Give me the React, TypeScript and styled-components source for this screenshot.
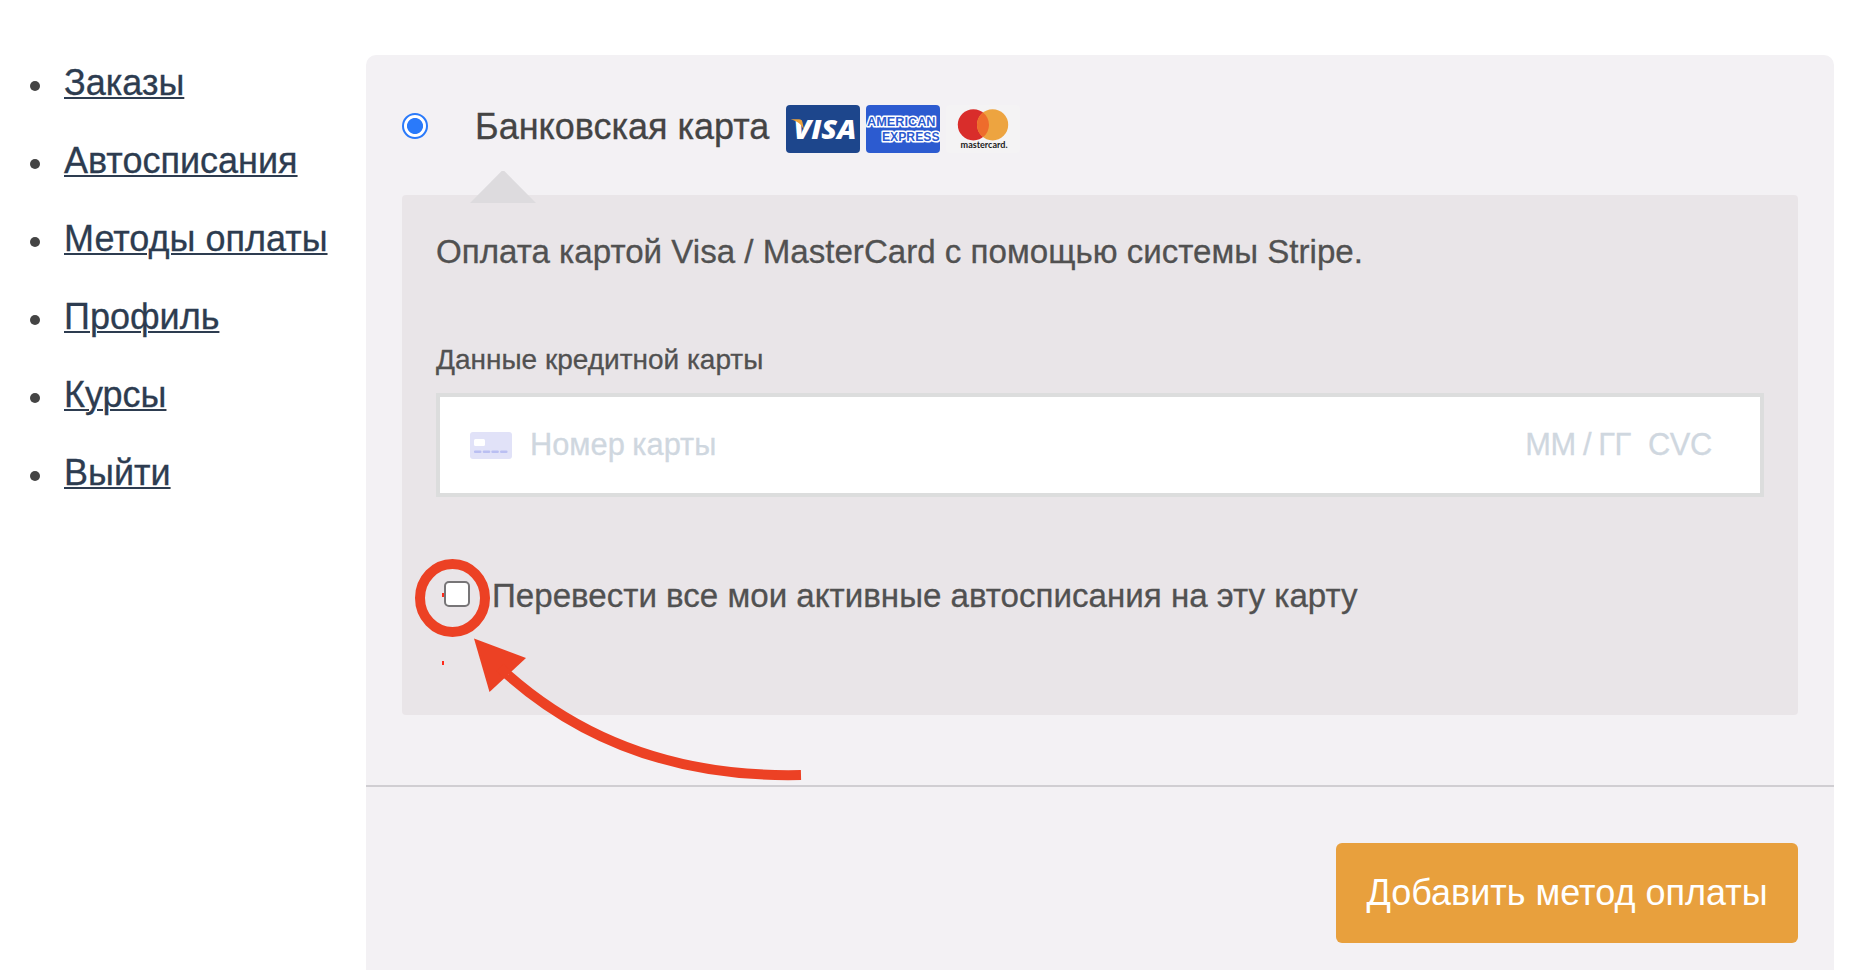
import React from 'react';
import styled, { createGlobalStyle } from 'styled-components';

const colors = {
  text: '#444444',
  boxText: '#515151',
  link: '#2d3c50',
  panel: '#f3f1f4',
  box: '#e9e5e8',
  notch: '#dddbde',
  border: '#dcdddd',
  divider: '#d0ced2',
  placeholder: '#cfd7df',
  accent: '#e8a03d',
  radio: '#2a7afa',
  mark: '#ec4124',
};

const GlobalStyle = createGlobalStyle`
  * {
    box-sizing: border-box;
  }

  body {
    margin: 0;
    background: #ffffff;
    color: ${colors.text};
    font-family: 'Liberation Sans', Arial, sans-serif;
    font-size: 36px;
    -webkit-text-stroke: 0.3px;
  }
`;

const Page = styled.div`
  display: flex;
  align-items: flex-start;
  height: 970px;
  overflow: hidden;
`;

const Nav = styled.nav`
  width: 366px;
  flex-shrink: 0;
  padding-top: 44px;
`;

const NavList = styled.ul`
  margin: 0;
  padding: 0 0 0 30px;
  list-style: none;
`;

const NavItem = styled.li`
  display: flex;
  align-items: center;
  gap: 24px;
  height: 78px;
  line-height: 78px;

  &::before {
    content: '';
    width: 10px;
    height: 10px;
    margin-top: 6px;
    border-radius: 50%;
    background: ${colors.text};
  }
`;

const NavLink = styled.a`
  color: ${colors.link};
  text-decoration: underline;
  text-decoration-thickness: 2px;
  text-underline-offset: 2px;
  white-space: nowrap;
`;

const Panel = styled.main`
  width: 1468px;
  height: 960px;
  margin-top: 55px;
  flex-shrink: 0;
  background: ${colors.panel};
  border-radius: 10px;
`;

const Methods = styled.section`
  height: 732px;
  padding: 34px 36px 0;
  border-bottom: 2px solid ${colors.divider};
`;

const MethodRow = styled.label`
  display: flex;
  align-items: center;
  height: 76px;
`;

const Radio = styled.input`
  appearance: none;
  width: 26px;
  height: 26px;
  margin: 0 47px 2px 0;
  border: 2px solid ${colors.radio};
  border-radius: 50%;
  background: radial-gradient(circle, ${colors.radio} 7.6px, #ffffff 8.4px);
`;

const MethodName = styled.span`
  width: 311px;
  line-height: 42px;
  white-space: nowrap;
`;

const Logos = styled.span`
  display: flex;
  gap: 6px;
  margin-top: 3px;
`;

const LogoSvg = styled.svg`
  display: block;
  width: 74px;
  height: 48px;
  border-radius: 4px;
  -webkit-text-stroke: 0;
`;

const PaymentBox = styled.div`
  position: relative;
  height: 520px;
  margin-top: 30px;
  padding: 34px 34px 0;
  background: ${colors.box};
  border-radius: 4px;
  color: ${colors.boxText};

  &::before {
    content: '';
    position: absolute;
    top: -24px;
    left: 68px;
    width: 66px;
    height: 32px;
    background: ${colors.notch};
    clip-path: polygon(48% 0, 52% 0, 100% 100%, 0 100%);
  }
`;

const Description = styled.p`
  margin: 0;
  font-size: 33.12px;
  line-height: 46px;
`;

const FieldLabel = styled.div`
  margin-top: 68px;
  font-size: 28px;
  line-height: 34px;
`;

const CardField = styled.div`
  display: flex;
  align-items: center;
  height: 104px;
  margin-top: 16px;
  padding: 0 48px 0 30px;
  background: #ffffff;
  border: 4px solid ${colors.border};
  color: ${colors.placeholder};
  font-size: 30.8px;
  word-spacing: -1px;
`;

const CardIcon = styled.svg`
  width: 42px;
  height: 27px;
  margin-right: 18px;
`;

const CardNumber = styled.span`
  flex: 1;
`;

const CardExpiry = styled.span`
  margin-right: 17px;
  letter-spacing: -0.4px;
`;

const CardCvc = styled.span`
  letter-spacing: -0.3px;
`;

const TransferRow = styled.label`
  display: flex;
  align-items: center;
  height: 46px;
  margin: 76px 0 0 8px;
  font-size: 33.12px;
  line-height: 46px;
`;

const Checkbox = styled.input`
  appearance: none;
  width: 26px;
  height: 26px;
  margin: 0 22px 4px 0;
  background: #ffffff;
  border: 2px solid #777577;
  border-radius: 5px;
`;

const Footer = styled.footer`
  display: flex;
  justify-content: flex-end;
  padding: 56px 36px 0;
`;

const SubmitButton = styled.button`
  width: 462px;
  height: 100px;
  padding: 0;
  border: 0;
  border-radius: 6px;
  background: ${colors.accent};
  color: #ffffff;
  font-family: inherit;
  font-size: 36px;
  line-height: 100px;
  white-space: nowrap;
  -webkit-text-stroke: 0;
`;

// Hand-drawn highlight that floats over the form
const Annotation = styled.svg`
  position: absolute;
  top: 360px;
  left: 8px;
  width: 400px;
  height: 230px;
  pointer-events: none;
`;

const links = ['Заказы', 'Автосписания', 'Методы оплаты', 'Профиль', 'Курсы', 'Выйти'];

const VisaLogo: React.FC = () => (
  <LogoSvg viewBox="0 0 74 48">
    <rect width="74" height="48" fill="#1d468c" />
    <text x="7.5" y="33.6" textLength="63" lengthAdjust="spacingAndGlyphs" fill="#ffffff" fontFamily="Open Sans" fontWeight="800" fontStyle="italic" fontSize="26.5">VISA</text>
    <path d="M4.5 14.2H13C15 14.2 16 15.2 16.4 17L18.2 25.5C15.8 19.6 11.5 16 4.5 14.2Z" fill="#eda33b" />
  </LogoSvg>
);

const AmexLogo: React.FC = () => (
  <LogoSvg viewBox="0 0 74 48">
    <rect width="74" height="48" fill="#2c5bd0" />
    <g fill="#2c5bd0" stroke="#ffffff" strokeWidth="3.2" strokeLinejoin="round" paintOrder="stroke" fontFamily="Liberation Sans" fontWeight="700" fontSize="13.4">
      <text x="1" y="21.3" textLength="68.5" lengthAdjust="spacingAndGlyphs">AMERICAN</text>
      <text x="16" y="36.3" textLength="57.5" lengthAdjust="spacingAndGlyphs">EXPRESS</text>
    </g>
  </LogoSvg>
);

const MastercardLogo: React.FC = () => (
  <LogoSvg viewBox="0 0 74 48">
    <rect width="74" height="48" fill="#f4f3f4" />
    <circle cx="27.4" cy="19.8" r="15.6" fill="#d92d2b" />
    <circle cx="46.6" cy="19.8" r="15.6" fill="#eda440" />
    <path d="M37 7.5A15.6 15.6 0 0 1 37 32.1A15.6 15.6 0 0 1 37 7.5Z" fill="#ee6c2c" />
    <text x="14.6" y="43.2" textLength="47" lengthAdjust="spacingAndGlyphs" fill="#1a1a1a" fontFamily="Lato" fontWeight="700" fontSize="8.6">mastercard.</text>
  </LogoSvg>
);

const App: React.FC = () => (
  <>
    <GlobalStyle />
    <Page>
      <Nav>
        <NavList>
          {links.map(link => (
            <NavItem key={link}>
              <NavLink>{link}</NavLink>
            </NavItem>
          ))}
        </NavList>
      </Nav>

      <Panel>
        <Methods>
          <MethodRow>
            <Radio type="radio" defaultChecked />
            <MethodName>Банковская карта</MethodName>
            <Logos>
              <VisaLogo />
              <AmexLogo />
              <MastercardLogo />
            </Logos>
          </MethodRow>

          <PaymentBox>
            <Description>Оплата картой Visa / MasterCard с помощью системы Stripe.</Description>
            <FieldLabel>Данные кредитной карты</FieldLabel>
            <CardField>
              <CardIcon viewBox="0 0 42 27">
                <rect width="42" height="27" rx="3" fill="#e1e2f8" />
                <rect x="4" y="7" width="11" height="7" rx="1.5" fill="#ffffff" />
                <path d="M5.2 19.8h5M14 19.8h5M22.6 19.8h5M31.3 19.8h5" stroke="#babff2" strokeWidth="2.6" strokeLinecap="round" />
              </CardIcon>
              <CardNumber>Номер карты</CardNumber>
              <CardExpiry>ММ / ГГ</CardExpiry>
              <CardCvc>CVC</CardCvc>
            </CardField>
            <TransferRow>
              <Checkbox type="checkbox" />
              Перевести все мои активные автосписания на эту карту
            </TransferRow>

            <Annotation viewBox="410 555 400 230">
              <path d="M442 593h2v4h-2zM442 661h2v4h-2z" fill="#ff2a1a" />
              <ellipse cx="452.5" cy="598" rx="32.5" ry="34" fill="none" stroke={colors.mark} strokeWidth="10" />
              <path d="M474 638.5L526 658L489.5 692Z" fill={colors.mark} />
              <path d="M500 667.5L508 675Q626 779 801 775" fill="none" stroke={colors.mark} strokeWidth="10" />
            </Annotation>
          </PaymentBox>
        </Methods>

        <Footer>
          <SubmitButton type="button">Добавить метод оплаты</SubmitButton>
        </Footer>
      </Panel>
    </Page>
  </>
);

export default App;
